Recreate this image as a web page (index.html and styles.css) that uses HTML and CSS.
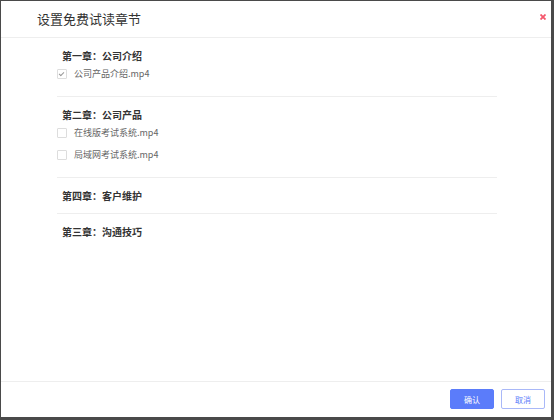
FILE: index.html
```html
<!DOCTYPE html>
<html lang="zh-CN">
<head>
  <meta charset="UTF-8">
  <meta name="viewport" content="width=device-width, initial-scale=1.0">
  <title>设置免费试读章节</title>
  <link rel="stylesheet" href="styles.css">
</head>
<body>

  <div class="modal">
    <div class="modal-header">
      <div class="modal-title">设置免费试读章节</div>
      <span class="modal-close">
        <svg width="6" height="6" viewBox="0 0 6 6"><path d="M0.5 0.5L5.5 5.5M5.5 0.5L0.5 5.5" stroke="#f5576c" stroke-width="1.8"/></svg>
      </span>
    </div>

    <div class="modal-body">
      <div class="chapter">
        <div class="chapter-title">第一章：公司介绍</div>
        <ul class="lessons">
          <li><span class="check checked"></span>公司产品介绍.mp4</li>
        </ul>
      </div>
      <div class="chapter">
        <div class="chapter-title">第二章：公司产品</div>
        <ul class="lessons">
          <li><span class="check"></span>在线版考试系统.mp4</li>
          <li><span class="check"></span>局域网考试系统.mp4</li>
        </ul>
      </div>
      <div class="chapter">
        <div class="chapter-title">第四章：客户维护</div>
      </div>
      <div class="chapter">
        <div class="chapter-title">第三章：沟通技巧</div>
      </div>
    </div>

    <div class="modal-footer">
      <button class="btn btn-primary">确认</button>
      <button class="btn btn-default">取消</button>
    </div>
  </div>

</body>
</html>
```

FILE: styles.css
```css
html, body {
  height: 100%;
}

body {
  margin: 0;
  padding: 1px 3px 3px 1px;
  box-sizing: border-box;
  background-color: #4a4a4a;
  font-family: "Noto Sans CJK SC", "Noto Sans", sans-serif;
  color: #333;
}

.modal {
  width: 550px;
  height: 416px;
  background-color: #fff;
  display: flex;
  flex-direction: column;
}

.modal-header {
  height: 36px;
  border-bottom: 1px solid #eee;
  display: flex;
  align-items: center;
  justify-content: space-between;
  padding: 0 5px 0 36px;
}

.modal-title {
  font-size: 13px;
  color: #333;
  line-height: 18px;
}

.modal-close {
  display: flex;
  margin-top: -4px;
}

.modal-body {
  flex: 1;
  padding: 1px 0 0;
  margin: 0 54px 0 56px;
}

.chapter {
  padding: 9px 0 8px;
  border-top: 1px solid #eee;
}

.chapter:first-child {
  padding-top: 8px;
  border-top: none;
}

.chapter-title {
  padding-left: 5px;
  font-size: 10px;
  font-weight: bold;
  line-height: 18px;
  color: #333;
}

.lessons {
  list-style: none;
  margin: 0 0 5px;
  padding: 0;
}

.lessons li {
  display: flex;
  align-items: center;
  font-size: 9px;
  line-height: 18px;
  color: #666;
  margin-top: 4px;
}

.lessons li:first-child {
  margin-top: 0;
}

.check {
  width: 8px;
  height: 8px;
  border: 1px solid #ddd;
  border-radius: 1px;
  margin-right: 7px;
  position: relative;
}

.check.checked::after {
  content: "";
  position: absolute;
  left: 2px;
  top: 1px;
  width: 2px;
  height: 4px;
  border: solid #999;
  border-width: 0 1px 1px 0;
  transform: rotate(45deg);
}

.modal-footer {
  height: 36px;
  border-top: 1px solid #eee;
  display: flex;
  justify-content: flex-end;
  align-items: flex-start;
  padding: 7px 6px 0 0;
  box-sizing: border-box;
  gap: 7px;
}

.btn {
  width: 44px;
  height: 20px;
  font-family: inherit;
  font-size: 8px;
  border-radius: 2px;
  padding: 0;
  cursor: pointer;
}

.btn-primary {
  background-color: #5b7cfa;
  border: 1px solid #5b7cfa;
  color: #fff;
}

.btn-default {
  background-color: #fff;
  border: 1px solid #a9b8f8;
  color: #5b7cfa;
}
```
